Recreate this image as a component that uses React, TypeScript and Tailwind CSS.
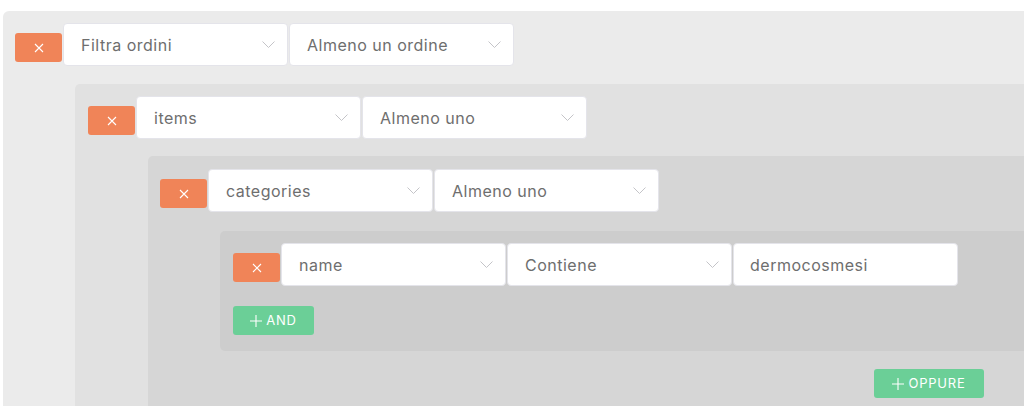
import React from 'react';

const font = { fontFamily: 'Inter, "Open Sans", sans-serif' };

function XIcon() {
  return (
    <svg width="10" height="10" viewBox="0 0 10 10" fill="none" stroke="white" strokeWidth="1.1">
      <path d="M1 1 L9 9 M9 1 L1 9" />
    </svg>
  );
}

function Chevron() {
  return (
    <svg width="13" height="7" viewBox="0 0 13 7" fill="none" stroke="#c4c4c8" strokeWidth="1">
      <path d="M0.5 0.5 L6.5 6.5 L12.5 0.5" />
    </svg>
  );
}

function PlusIcon() {
  return (
    <svg width="12" height="12" viewBox="0 0 12 12" fill="none" stroke="white" strokeWidth="1.1">
      <path d="M6 0 V12 M0 6 H12" />
    </svg>
  );
}

function DeleteButton() {
  return (
    <button className="mt-[10px] flex h-[29px] w-[47px] shrink-0 items-center justify-center rounded-[3px] bg-[#f08458]">
      <XIcon />
    </button>
  );
}

function Select({ label }: { label: string }) {
  return (
    <div className="flex h-[43px] w-[225px] shrink-0 items-center justify-between rounded-[4px] border border-[#e4e4ea] bg-white pl-[17px] pr-[12px]">
      <span className="pt-px text-[16px] tracking-[0.5px] text-[#6e6e6e]">{label}</span>
      <Chevron />
    </div>
  );
}

function TextInput({ value }: { value: string }) {
  return (
    <div className="flex h-[43px] w-[225px] shrink-0 items-center rounded-[4px] border border-[#e4e4ea] bg-white pl-[16px]">
      <span className="pt-px text-[16px] tracking-[0.5px] text-[#6e6e6e]">{value}</span>
    </div>
  );
}

function GreenButton({ label, className }: { label: string; className?: string }) {
  return (
    <button
      className={`flex h-[29px] items-center justify-center gap-[4px] rounded-[3px] bg-[#6bcf97] text-[13px] font-normal tracking-[0.8px] text-white ${className ?? ''}`}
    >
      <PlusIcon />
      <span>{label}</span>
    </button>
  );
}

function Row({ children }: { children: React.ReactNode }) {
  return (
    <div className="flex items-start gap-px">
      <DeleteButton />
      {children}
    </div>
  );
}

export default function App() {
  return (
    <div className="h-[406px] w-[1024px] overflow-hidden bg-white pl-[3px] pt-[11px]" style={font}>
      <div className="min-h-[500px] w-[1300px] rounded-tl-[6px] bg-[#ebebeb] pl-3 pt-3">
        <Row>
          <Select label="Filtra ordini" />
          <Select label="Almeno un ordine" />
        </Row>

        <div className="ml-[60px] mt-[18px] min-h-[400px] rounded-l-[5px] bg-[#e1e1e1] pl-[13px] pt-3">
          <Row>
            <Select label="items" />
            <Select label="Almeno uno" />
          </Row>

          <div className="ml-[60px] mt-[17px] min-h-[300px] rounded-l-[5px] bg-[#d6d6d6] pl-3 pt-[13px]">
            <Row>
              <Select label="categories" />
              <Select label="Almeno uno" />
            </Row>

            <div className="ml-[60px] mt-[19px] rounded-l-[5px] bg-[#cdcdcd] pb-[16px] pl-[13px] pt-3">
              <Row>
                <Select label="name" />
                <Select label="Contiene" />
                <TextInput value="dermocosmesi" />
              </Row>
              <GreenButton label="AND" className="mt-[20px] w-[81px]" />
            </div>

            <GreenButton label="OPPURE" className="ml-[714px] mt-[18px] w-[110px]" />
          </div>
        </div>
      </div>
    </div>
  );
}
